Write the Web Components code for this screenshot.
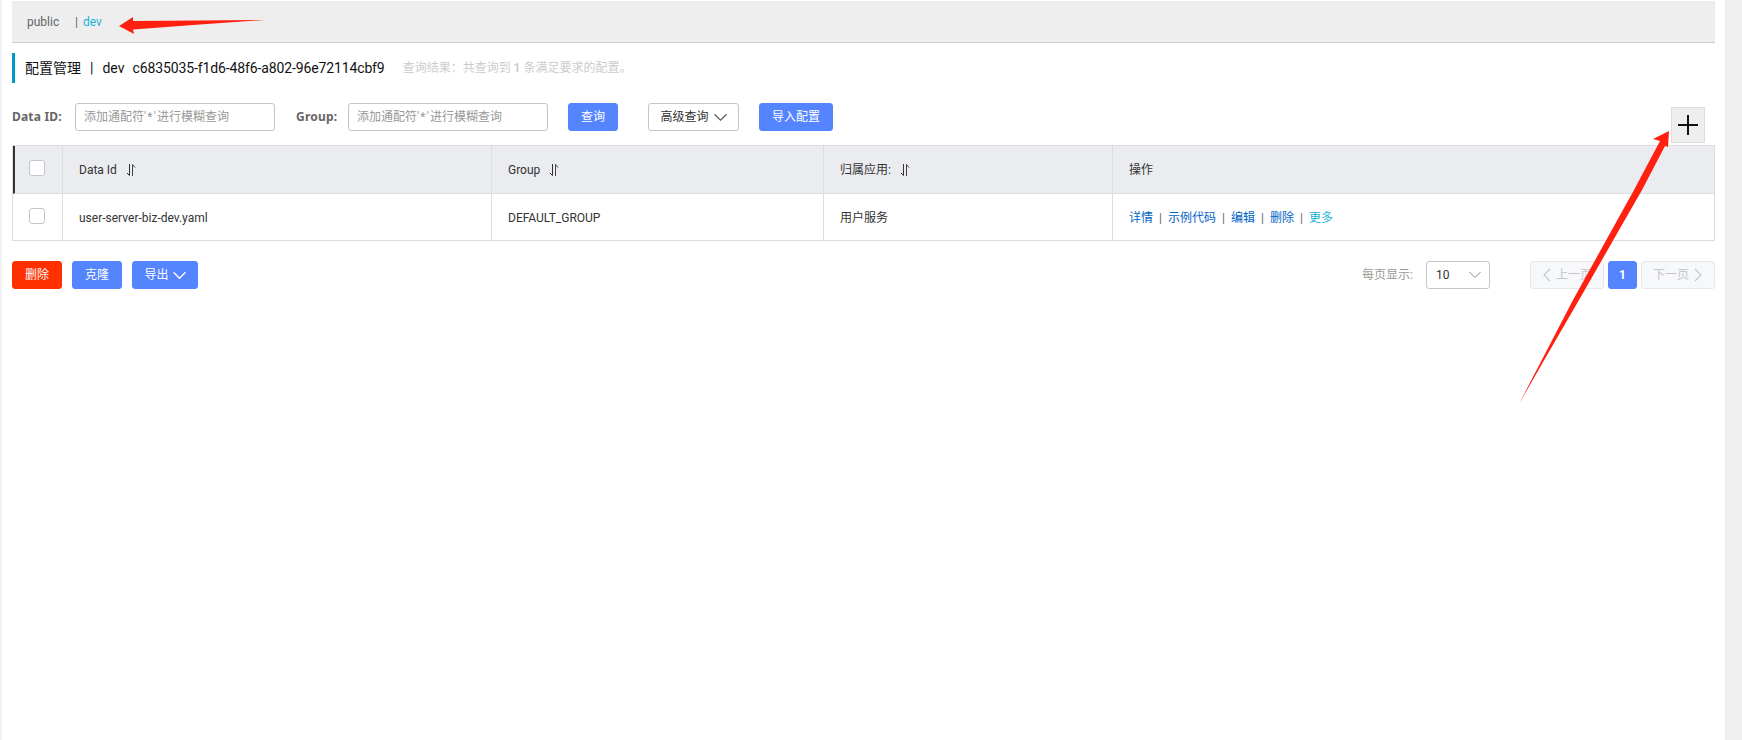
<!DOCTYPE html>
<html>
<head>
<meta charset="utf-8">
<title>配置管理</title>
<style>
html, body{
  margin: 0;
  height: 100%;
  overflow: hidden;
  background: #fff;
  font: 12px/1.5 Roboto, "Noto Sans CJK SC", sans-serif;
  color: #333;
}
</style>
</head>
<body>
<config-page>
  <ns-bar></ns-bar>
  <page-title></page-title>
  <filter-bar></filter-bar>
  <config-table></config-table>
  <batch-bar></batch-bar>
</config-page>

<script>
const chevron = (size, color, weight = 1.2) => `<svg width="${size}" height="${size}" viewBox="0 0 12 12" fill="none" stroke="${color}" stroke-width="${weight}"><path d="M.5 3 6 8.5 11.5 3"/></svg>`;
const sort_icon = `<svg width="11" height="14" viewBox="0 0 11 14" fill="none" stroke="#333" stroke-width="1"><path d="M4.5 1V12.5M2 10 4.5 12.5"/><path d="M7.5 13V1.5L10 4.5" stroke="#444"/></svg>`;
const placeholder = `添加通配符<span style="letter-spacing:1.2px">'*'</span>进行模糊查询`;

function define(name, html){
  const template = document.createElement('template');
  template.innerHTML = html;
  customElements.define(name, class extends HTMLElement{
    constructor(){
      super();
      this.attachShadow({mode:"open"});
      this.shadowRoot.appendChild(template.content.cloneNode(true));
    }
  });
}

define('config-page', `
<style>
:host{ display: flex; height: 740px; position: relative; }
#left{ width: 2px; background: #eef1f6; }
main{ flex: 1; padding: 1px 10px 0 10px; min-width: 0; }
#right{ width: 17px; background: #f0f0f0; }
#plus{
  position: absolute; left: 1671px; top: 107px;
  width: 34px; height: 36px; box-sizing: border-box;
  background: #eee; border: 1px solid #ddd;
  display: flex; align-items: center; justify-content: center;
}
#arrows{ position: absolute; left: 0; top: 0; pointer-events: none; }
</style>
<div id="left"></div>
<main><slot></slot></main>
<div id="right"></div>
<div id="plus"><svg width="20" height="20" viewBox="0 0 20 20"><path d="M0 10H20M10 0V20" stroke="#111" stroke-width="2"/></svg></div>
<svg id="arrows" width="1742" height="740">
  <polygon fill="#ff2010" points="265,20 200,20.5 133,21 133,17 119,26 134,34 133,29.5 200,24.5"/>
  <polygon fill="#ff2010" points="1519,404 1547,350 1573,300 1634,190 1660,141 1653,139 1669,131 1668,147 1665,146 1642,190 1579,300 1550,350"/>
</svg>`);

define('ns-bar', `
<style>
:host{
  display: flex; align-items: center; height: 41px; padding-left: 15px;
  background: #eee; border-bottom: 1px solid #ccc;
  font-size: 12px; color: #666;
}
#pub{ width: 48px; }
#sep{ width: 8px; color: #666; }
#active{ color: #1ab4dc; }
</style>
<span id="pub">public</span><span id="sep">|</span><span id="active">dev</span>`);

define('page-title', `
<style>
:host{
  display: flex; align-items: center; height: 30px; margin-top: 10px;
  border-left: 3px solid #09c; padding-left: 10px;
  font-size: 14px; color: #111; white-space: pre;
}
#sep{ margin: 0 9px; }
#ns{ margin-right: 8px; }
#uuid{ letter-spacing: -.12px; }
#result{ margin-left: 18px; font-size: 12px; color: #ccc; }
b{ font-weight: 700; }
</style>
<span>配置管理</span><span id="sep">|</span><span id="ns">dev</span><span id="uuid">c6835035-f1d6-48f6-a802-96e72114cbf9</span><span id="result">查询结果：共查询到 <b>1</b> 条满足要求的配置。</span>`);

define('nacos-button', `
<style>
:host{
  display: inline-flex; align-items: center; justify-content: center; gap: 5px;
  height: 28px; box-sizing: border-box; border-radius: 3px;
  background: var(--bg, #5584ff); color: var(--fg, #fff);
  border: 1px solid var(--line, var(--bg, #5584ff));
  font-size: 12px; white-space: nowrap;
}
</style>
<slot></slot>`);

define('filter-bar', `
<style>
:host{ display: flex; align-items: center; height: 28px; margin-top: 20px; font-size: 12px; }
label{ font-family: "Noto Sans", sans-serif; font-weight: 700; color: #666; letter-spacing: .2px; }
.in{
  width: 200px; height: 28px; box-sizing: border-box; padding-left: 8px;
  border: 1px solid #c4c6cf; border-radius: 3px;
  display: flex; align-items: center; color: #999;
}
#group-label{ margin-left: 21px; width: 52px; }
#data-label{ width: 63px; }
#search{ margin-left: 20px; width: 50px; }
#adv{ margin-left: 30px; width: 91px; --bg: #fff; --fg: #333; --line: #c4c6cf; }
#imp{ margin-left: 20px; width: 74px; }
</style>
<label id="data-label">Data ID:</label>
<div class="in"><span>${placeholder}</span></div>
<label id="group-label">Group:</label>
<div class="in"><span>${placeholder}</span></div>
<nacos-button id="search">查询</nacos-button>
<nacos-button id="adv">高级查询 ${chevron(13,'#555',1)}</nacos-button>
<nacos-button id="imp">导入配置</nacos-button>`);

define('check-box', `
<style>
:host{
  display: block; width: 16px; height: 16px; box-sizing: border-box; margin-top: -3px;
  background: #fff; border: 1px solid #c4c6cf; border-radius: 3px;
}
</style>`);

define('config-table', `
<style>
:host{
  display: grid; grid-template-columns: 49px 429px 332px 289px 1fr;
  grid-template-rows: 48px 47px;
  margin-top: 14px;
  border: 1px solid #dcdee3;
  font-size: 12px; color: #333; height: 96px; box-sizing: border-box;
}
.c{ display: flex; align-items: center; gap: 8px; padding-left: 16px; border-left: 1px solid #dcdee3; }
.c.first{ border-left: 0; padding-left: 16px; }
.h{ background: #ebecf0; border-bottom: 1px solid #dcdee3; }
.h.first{ border-left: 2px solid #333; padding-left: 14px; }
.ops{ gap: 0; }
a{ color: #0064c8; }
a.more{ color: #1ab4dc; }
i{ font-style: normal; color: #666; width: 15px; text-align: center; }
</style>
<div class="c h first"><check-box></check-box></div>
<div class="c h">Data Id ${sort_icon}</div>
<div class="c h">Group ${sort_icon}</div>
<div class="c h">归属应用: ${sort_icon}</div>
<div class="c h">操作</div>
<div class="c first"><check-box></check-box></div>
<div class="c">user-server-biz-dev.yaml</div>
<div class="c">DEFAULT_GROUP</div>
<div class="c">用户服务</div>
<div class="c ops"><a>详情</a><i>|</i><a>示例代码</a><i>|</i><a>编辑</a><i>|</i><a>删除</a><i>|</i><a class="more">更多</a></div>`);

define('batch-bar', `
<style>
:host{ display: flex; align-items: center; height: 28px; margin-top: 20px; font-size: 12px; }
#del{ width: 50px; --bg: #ff3000; }
#clone{ width: 50px; margin-left: 10px; }
#exp{ width: 66px; margin-left: 10px; gap: 4px; }
#size-label{ margin-left: auto; margin-right: 13px; color: #999; }
#size{
  width: 64px; height: 28px; box-sizing: border-box; padding: 0 8px 0 9px;
  border: 1px solid #c4c6cf; border-radius: 3px; color: #333;
  display: flex; align-items: center; justify-content: space-between;
}
.pg{ width: 74px; --bg: #f7f8fa; --fg: #c4c6cf; --line: #e6e7eb; }
#prev{ margin-left: 40px; }
#cur{ width: 29px; margin: 0 4px; font-weight: 700; }
</style>
<nacos-button id="del">删除</nacos-button>
<nacos-button id="clone">克隆</nacos-button>
<nacos-button id="exp">导出 ${chevron(13,'#fff')}</nacos-button>
<span id="size-label">每页显示:</span>
<div id="size"><span>10</span>${chevron(12,'#888',1)}</div>
<nacos-button id="prev" class="pg"><svg width="9" height="14" viewBox="0 0 9 14" fill="none" stroke="#c4c6cf" stroke-width="1.2"><path d="M8 1 2 7 8 13"/></svg>上一页</nacos-button>
<nacos-button id="cur">1</nacos-button>
<nacos-button id="next" class="pg">下一页<svg width="9" height="14" viewBox="0 0 9 14" fill="none" stroke="#c4c6cf" stroke-width="1.2"><path d="M1 1 7 7 1 13"/></svg></nacos-button>`);
</script>
</body>
</html>
